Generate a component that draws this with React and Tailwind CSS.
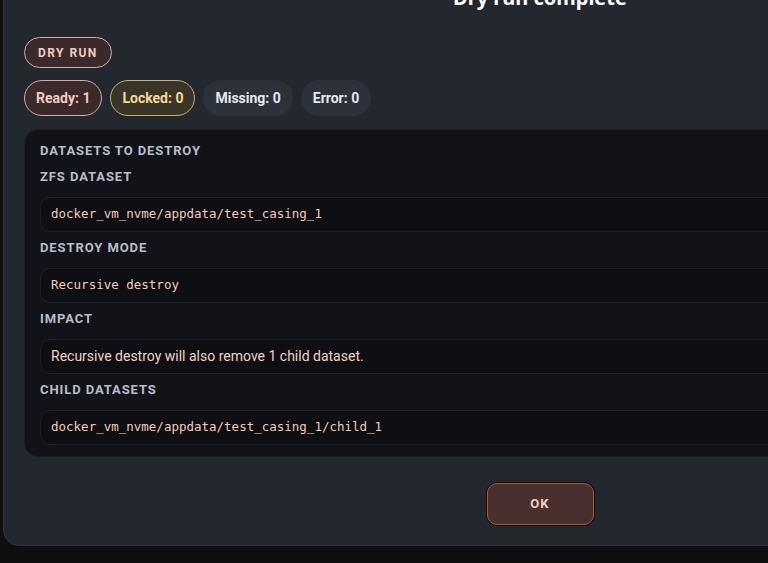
import React from "react";

const stats = [
  { label: "Ready: 1", cls: "bg-[#3a2a2b] border-[#d9aa9d] text-[#f4cbbf]" },
  { label: "Locked: 0", cls: "bg-[#3a3529] border-[#c9b06c] text-[#f6d88e]" },
  { label: "Missing: 0", cls: "bg-[#2d3139] border-transparent text-[#e6e8ec]" },
  { label: "Error: 0", cls: "bg-[#2d3139] border-transparent text-[#e6e8ec]" },
];

const fields = [
  { label: "ZFS DATASET", value: "docker_vm_nvme/appdata/test_casing_1", mono: true },
  { label: "DESTROY MODE", value: "Recursive destroy", mono: true },
  { label: "IMPACT", value: "Recursive destroy will also remove 1 child dataset.", mono: false },
  { label: "CHILD DATASETS", value: "docker_vm_nvme/appdata/test_casing_1/child_1", mono: true },
];

function Field({ label, value, mono }) {
  return (
    <div>
      <div className="text-[13px] leading-[16px] font-bold tracking-[0.07em] text-[#b7bec9] mb-3">
        {label}
      </div>
      <div className="h-[35px] flex items-center rounded-[10px] border border-[#1e2127] bg-[#0e0f12] pl-[10px]">
        <span
          className={
            mono
              ? "font-['DejaVu_Sans_Mono',monospace] text-[12.5px] text-[#f3cbbd] whitespace-nowrap"
              : "text-[14px] text-[#f1d2c6] whitespace-nowrap"
          }
        >
          {value}
        </span>
      </div>
    </div>
  );
}

export default function App() {
  return (
    <div className="h-[563px] w-[768px] overflow-hidden bg-[#0f0f10] font-['Roboto',sans-serif]">
      <div className="ml-[3px] mt-[-40px] w-[1074px] rounded-[16px] border border-[#30343b] bg-[#23272e] px-[20px] pt-[23px] pb-[20px]">
        <h2 className="text-center text-[20px] leading-[28px] font-bold text-white font-['Noto_Sans',sans-serif]">
          Dry run complete
        </h2>

        <div className="mt-[25px] flex">
          <span className="h-[31px] px-[13px] flex items-center rounded-full border border-[#d9aa9d] bg-[#3a2a2b] text-[12px] font-bold tracking-[0.12em] text-[#f4cbbf]">
            DRY RUN
          </span>
        </div>

        <div className="mt-[12px] flex gap-2">
          {stats.map((s) => (
            <span
              key={s.label}
              className={`h-[36px] px-[11px] flex items-center rounded-full border text-[14px] font-bold ${s.cls}`}
            >
              {s.label}
            </span>
          ))}
        </div>

        <div className="mt-[13px] rounded-[14px] border border-[#1c1f24] bg-[#121318] px-[15px] pt-[13px] pb-[11px]">
          <div className="text-[13px] leading-[16px] font-bold tracking-[0.07em] text-[#b7bec9] mb-[10px]">
            DATASETS TO DESTROY
          </div>
          <div className="flex flex-col gap-2">
            {fields.map((f) => (
              <Field key={f.label} {...f} />
            ))}
          </div>
        </div>

        <div className="mt-[26px] flex justify-center">
          <button className="h-[42px] w-[107px] rounded-[10px] border border-[#b4552e] bg-[#47302e] text-[13px] font-bold tracking-[0.08em] text-[#f5d0c0] shadow-[0_0_0_1px_#111]">
            OK
          </button>
        </div>
      </div>
    </div>
  );
}
